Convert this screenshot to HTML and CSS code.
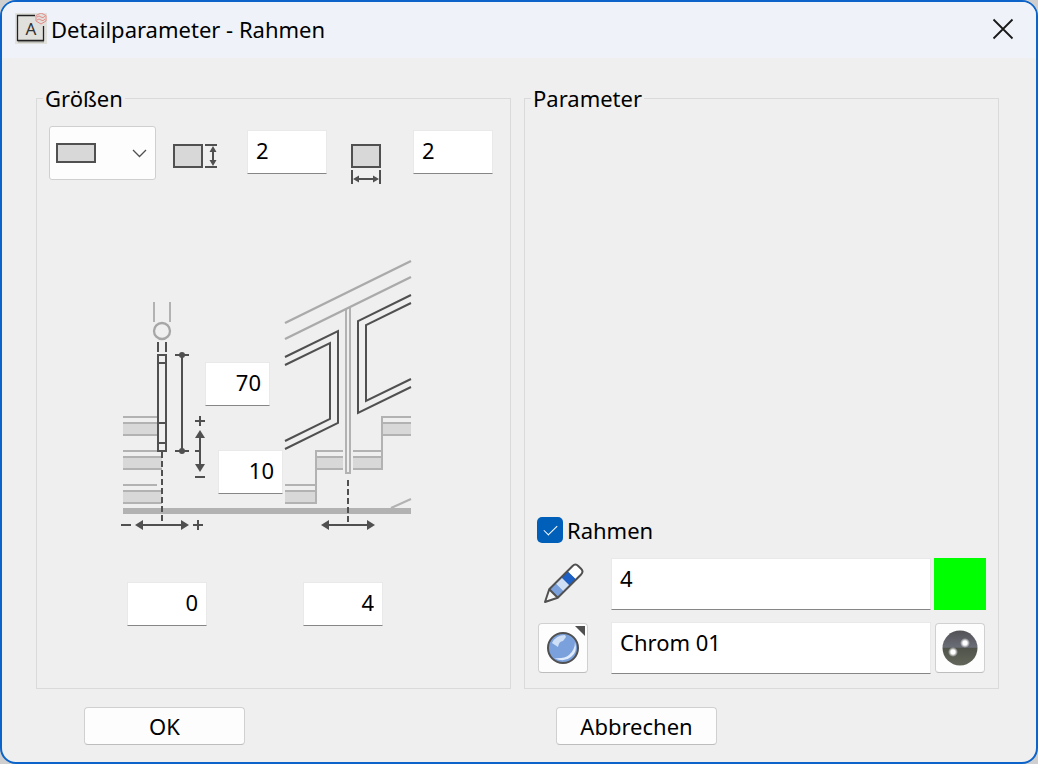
FILE: index.html
```html
<!DOCTYPE html>
<html lang="de">
<head>
<meta charset="utf-8">
<title>Detailparameter - Rahmen</title>
<link rel="stylesheet" href="styles.css">
</head>
<body>
<form class="dialog">
  <header class="titlebar">
    <svg class="app-icon" width="32" height="32" viewBox="0 0 32 32" aria-hidden="true">
      <rect width="32" height="31" fill="#e0e0dd"/>
      <path d="M3 28.500h26" fill="none" stroke="#a3a49e" stroke-width="2"/>
      <path d="M20 2.500H2.500v25h26V13" fill="none" stroke="#222" stroke-width="1.300"/>
      <text x="16" y="22" text-anchor="middle" class="app-letter">A</text>
      <path d="M26 0l5 2.500v5.500l-5 3-5-3V2.500zM22 4q2-2 4 0t4-1M22 7q2-2 4 0t4-1" fill="none" stroke="#e58a86" stroke-width="1"/>
    </svg>
    <h1 class="title">Detailparameter - Rahmen</h1>
    <button type="button" class="close" aria-label="Schließen">
      <svg width="22" height="22" viewBox="0 0 22 22"><path d="M1.500 1.500l19 19M20.500 1.500l-19 19" stroke="#191919" stroke-width="1.800" fill="none"/></svg>
    </button>
  </header>

  <main class="panels">
    <fieldset class="panel">
      <legend>Größen</legend>
      <div class="sizes">
        <div class="shape">
          <select class="shape-select" aria-label="Profilform"><option aria-label="Rechteck"></option></select>
          <svg class="shape-art" width="107" height="54" viewBox="0 0 107 54" aria-hidden="true">
            <rect x="8" y="18" width="38" height="18" fill="#d8d8d8" stroke="#505050" stroke-width="2"/>
            <path d="M84 24l6.500 6.500L97 24" fill="none" stroke="#505050" stroke-width="1.300"/>
          </svg>
        </div>
        <svg width="59" height="60" viewBox="172 126 59 60" aria-hidden="true">
          <rect x="174" y="145" width="28" height="22" fill="#d8d8d8" stroke="#505050" stroke-width="2"/>
          <path d="M205 145h12M205 167h12M213 149v14" fill="none" stroke="#505050" stroke-width="2"/>
          <path d="M213 146l3.500 6h-7zM213 166l3.500-6h-7z" fill="#505050"/>
        </svg>
        <input class="field" type="text" value="2" aria-label="Höhe">
        <svg width="54" height="60" viewBox="343 126 54 60" aria-hidden="true">
          <rect x="352" y="145" width="28" height="22" fill="#d8d8d8" stroke="#505050" stroke-width="2"/>
          <path d="M352 170v14M380 170v14M357 179h19" fill="none" stroke="#505050" stroke-width="2"/>
          <path d="M353 179l6-3.500v7zM379 179l-6-3.500v7z" fill="#505050"/>
        </svg>
        <input class="field" type="text" value="2" aria-label="Breite">
      </div>

      <div class="drawing">
        <svg class="canvas" width="307" height="276" viewBox="120 256 307 276" aria-hidden="true">
          <g fill="#d8d8d8">
            <path d="M123 423h35v12h-35zM123 457h39v12h-39zM123 491h39v12h-39z"/>
            <path d="M285 491h31v12h-31zM316 457h27v12h-27zM353 457h29v12h-29zM382 423h29v12h-29z"/>
          </g>
          <g fill="none" stroke="#b2b2b2" stroke-width="2">
            <path d="M123 417h35M123 423h35M123 435h35M123 451h34M123 457h39M123 469h39M123 485h34M123 491h39M123 503h39"/>
            <path d="M285 485h31M285 491h31M285 503h31V451h27M316 457h27M316 469h27M353 451h29M353 457h29M353 469h29V417h29M382 423h29M382 435h29"/>
            <path d="M154 302v20M170 302v20M391 508l20-9"/>
            <path d="M346 309v164h4V308"/>
            <path d="M285 323l126-62M285 339l126-62" stroke="#aaa" stroke-width="2.500"/>
            <path d="M123 511h288" stroke-width="6"/>
            <circle cx="162" cy="331" r="8" stroke="#a6a6a6" stroke-width="2.300"/>
          </g>
          <g fill="none" stroke="#505050" stroke-width="2">
            <path d="M158 342v10M166 342v10M158 355h8v96h-8zM158 363h8M158 423h8M158 443h8"/>
            <path d="M182 355v96M175 355h14M175 451h14"/>
            <path d="M195 421h10M200 416v10M200 436v30M195 451h5M195 477h10"/>
            <path d="M162 452v72M348 480v44" stroke-dasharray="6 3"/>
            <path d="M121 525h10M142 525h40M193 525h10M198 520v10M328 525h40"/>
            <path d="M285 357l53-26v92l-53 26M285 365l45-22v76l-45 22"/>
            <path d="M411 295l-53 26v92l53-26M411 303l-45 22v76l45-22"/>
          </g>
          <g fill="#505050">
            <circle cx="182" cy="355" r="3"/><circle cx="182" cy="451" r="3"/>
            <path d="M200 430l5 8h-10zM200 472l5-8h-10zM135 525l8-5v10zM189 525l-8-5v10zM321 525l8-5v10zM375 525l-8-5v10z"/>
          </g>
        </svg>
        <input class="field number pin height-pin" type="text" value="70" aria-label="Rahmenhöhe">
        <input class="field number pin offset-pin" type="text" value="10" aria-label="Abstand unten">
      </div>

      <div class="offsets">
        <input class="field number" type="text" value="0" aria-label="Versatz quer">
        <input class="field number" type="text" value="4" aria-label="Versatz längs">
      </div>
    </fieldset>

    <fieldset class="panel materials">
      <legend>Parameter</legend>
      <label class="toggle"><input type="checkbox" checked><span>Rahmen</span></label>
      <div class="row">
        <svg width="52" height="52" viewBox="537 558 52 52" aria-hidden="true">
          <g transform="translate(545 602) rotate(-45)">
            <path d="M0 0L12-6V6z" fill="#f5f5f5"/>
            <path d="M12-6h9V6h-9z" fill="#7ba1dc"/>
            <path d="M21-6h8V6h-8z" fill="#cfdff6"/>
            <path d="M29-6h9V6h-9z" fill="#1e60c4"/>
            <path d="M38-6h7q4 0 4 4v4q0 4-4 4h-7z" fill="#fff"/>
            <path d="M0 0L12-6h33q4 0 4 4v4q0 4-4 4H12zM12-6V6" fill="none" stroke="#505050" stroke-width="2" stroke-linejoin="round"/>
          </g>
        </svg>
        <input class="field tall" type="text" value="4" aria-label="Stift">
        <button type="button" class="swatch" aria-label="Stiftfarbe"></button>
      </div>
      <div class="row">
        <button type="button" class="btn icon-btn" aria-label="Material">
          <svg width="48" height="48" viewBox="539 624 48 48">
            <circle cx="563" cy="648" r="15" fill="#7ba1dc" stroke="#505050" stroke-width="2"/>
            <path d="M552 643q4-8 13-8l1 2-3 4q-4 0-5 6z" fill="#cfdff6"/>
            <path d="M575 642q3 10-4 15-7 6-17 1 10 1 15-3 6-5 6-13z" fill="#dfeafb"/>
            <path d="M575 626h10v10z" fill="#505050"/>
          </svg>
        </button>
        <input class="field tall" type="text" value="Chrom 01" aria-label="Materialname">
        <button type="button" class="btn icon-btn" aria-label="Materialvorschau">
          <svg width="48" height="48" viewBox="936 624 48 48">
            <defs>
              <linearGradient id="chrome" x1="0" y1="0" x2="0" y2="1">
                <stop offset="0" stop-color="#515156"/><stop offset=".48" stop-color="#6b6d77"/>
                <stop offset=".5" stop-color="#50534a"/><stop offset="1" stop-color="#62665a"/>
              </linearGradient>
              <radialGradient id="glint"><stop offset="0" stop-color="#fff"/><stop offset=".4" stop-color="#fff"/><stop offset="1" stop-color="#fff" stop-opacity="0"/></radialGradient>
            </defs>
            <circle cx="960" cy="648" r="17.500" fill="url(#chrome)"/>
            <circle cx="965" cy="643" r="5" fill="url(#glint)"/>
            <circle cx="953" cy="652" r="5" fill="url(#glint)"/>
          </svg>
        </button>
      </div>
    </fieldset>
  </main>

  <footer class="actions">
    <button type="button" class="btn action ok">OK</button>
    <button type="button" class="btn action cancel">Abbrechen</button>
  </footer>
</form>
</body>
</html>
```
FILE: styles.css
```css
* { box-sizing: border-box; }

body {
  margin: 0;
  background: #cfcfcf;
  color: #000;
  font: 22px/32px "Noto Sans", "Open Sans", sans-serif;
}

button, input, select { font: inherit; color: inherit; }
svg { display: block; }

.dialog {
  display: flex;
  flex-direction: column;
  min-height: 100vh;
  overflow: hidden;
  border: 2px solid #0c64ca;
  border-radius: 16px;
  background: #efefef;
}

.titlebar {
  display: flex;
  align-items: center;
  gap: 4px;
  height: 56px;
  padding: 0 22px 2px 13px;
  background: #eff3f9;
}

.app-letter { font: 17px "Noto Sans", sans-serif; fill: #333; }

.title { margin: 0; font-size: 22px; font-weight: 400; }

.close {
  margin-left: auto;
  padding: 0;
  border: 0;
  background: none;
}

.panels {
  flex: 1;
  display: grid;
  grid-template-columns: 1fr 1fr;
  gap: 13px;
  padding: 24px 37px 0 34px;
}

.panel {
  min-width: 0;
  margin: 0;
  padding: 12px;
  border: 1px solid #dadada;
}

.panel legend { margin-left: -6px; padding: 0 2px; }

.sizes { display: flex; gap: 16px; }
.sizes .field { margin-top: 4px; }

.shape { position: relative; width: 107px; height: 54px; }

.shape-select {
  width: 100%;
  height: 100%;
  appearance: none;
  border: 1px solid #cfcfcf;
  border-radius: 3px;
  background: #fdfdfd;
}

.shape-art { position: absolute; inset: 0; pointer-events: none; }

.field {
  width: 80px;
  height: 44px;
  padding: 0 8px 4px;
  border: 1px solid #e9e9e9;
  border-bottom-color: #868686;
  border-radius: 0;
  background: #fff;
}

.number { text-align: right; }

.drawing { position: relative; width: 307px; margin: 70px auto 0; }
.pin { position: absolute; width: 65px; }
.height-pin { left: 85px; top: 106px; }
.offset-pin { left: 98px; top: 194px; }

.offsets {
  display: flex;
  gap: 96px;
  width: 307px;
  margin: 50px auto 0;
  padding-left: 7px;
}

.materials {
  display: flex;
  flex-direction: column;
  justify-content: flex-end;
  gap: 12px;
  padding-bottom: 14px;
}

.toggle { display: flex; align-items: center; gap: 4px; align-self: flex-start; }

.toggle input {
  width: 26px;
  height: 26px;
  margin: 0;
  appearance: none;
  border-radius: 5px;
  background: #005fb8;
  display: grid;
  place-items: center;
}

.toggle input:checked::before {
  content: "";
  width: 12px;
  height: 6px;
  margin-bottom: 4px;
  border: solid #fff;
  border-width: 0 0 1px 1px;
  transform: rotate(-45deg);
}

.row { display: flex; align-items: center; }
.row > svg, .swatch { flex: none; width: 52px; }

.row .tall {
  flex: 1;
  min-width: 0;
  height: 52px;
  margin: 0 3px 0 22px;
  padding-bottom: 12px;
}

.swatch { height: 52px; padding: 0; border: 0; background: #0f0; }

.btn {
  padding: 0;
  border: 1px solid #d0d0d0;
  border-bottom-color: #bdbdbd;
  border-radius: 4px;
  background: #fdfdfd;
}

.icon-btn { flex: none; width: 50px; height: 50px; margin: 0 1px; }

.actions {
  display: grid;
  grid-template-columns: 1fr 1fr;
  gap: 13px;
  padding: 18px 37px 17px 34px;
}

.action { width: 161px; height: 38px; }
.ok { margin-left: 48px; }
.cancel { margin-left: 32px; }
```
